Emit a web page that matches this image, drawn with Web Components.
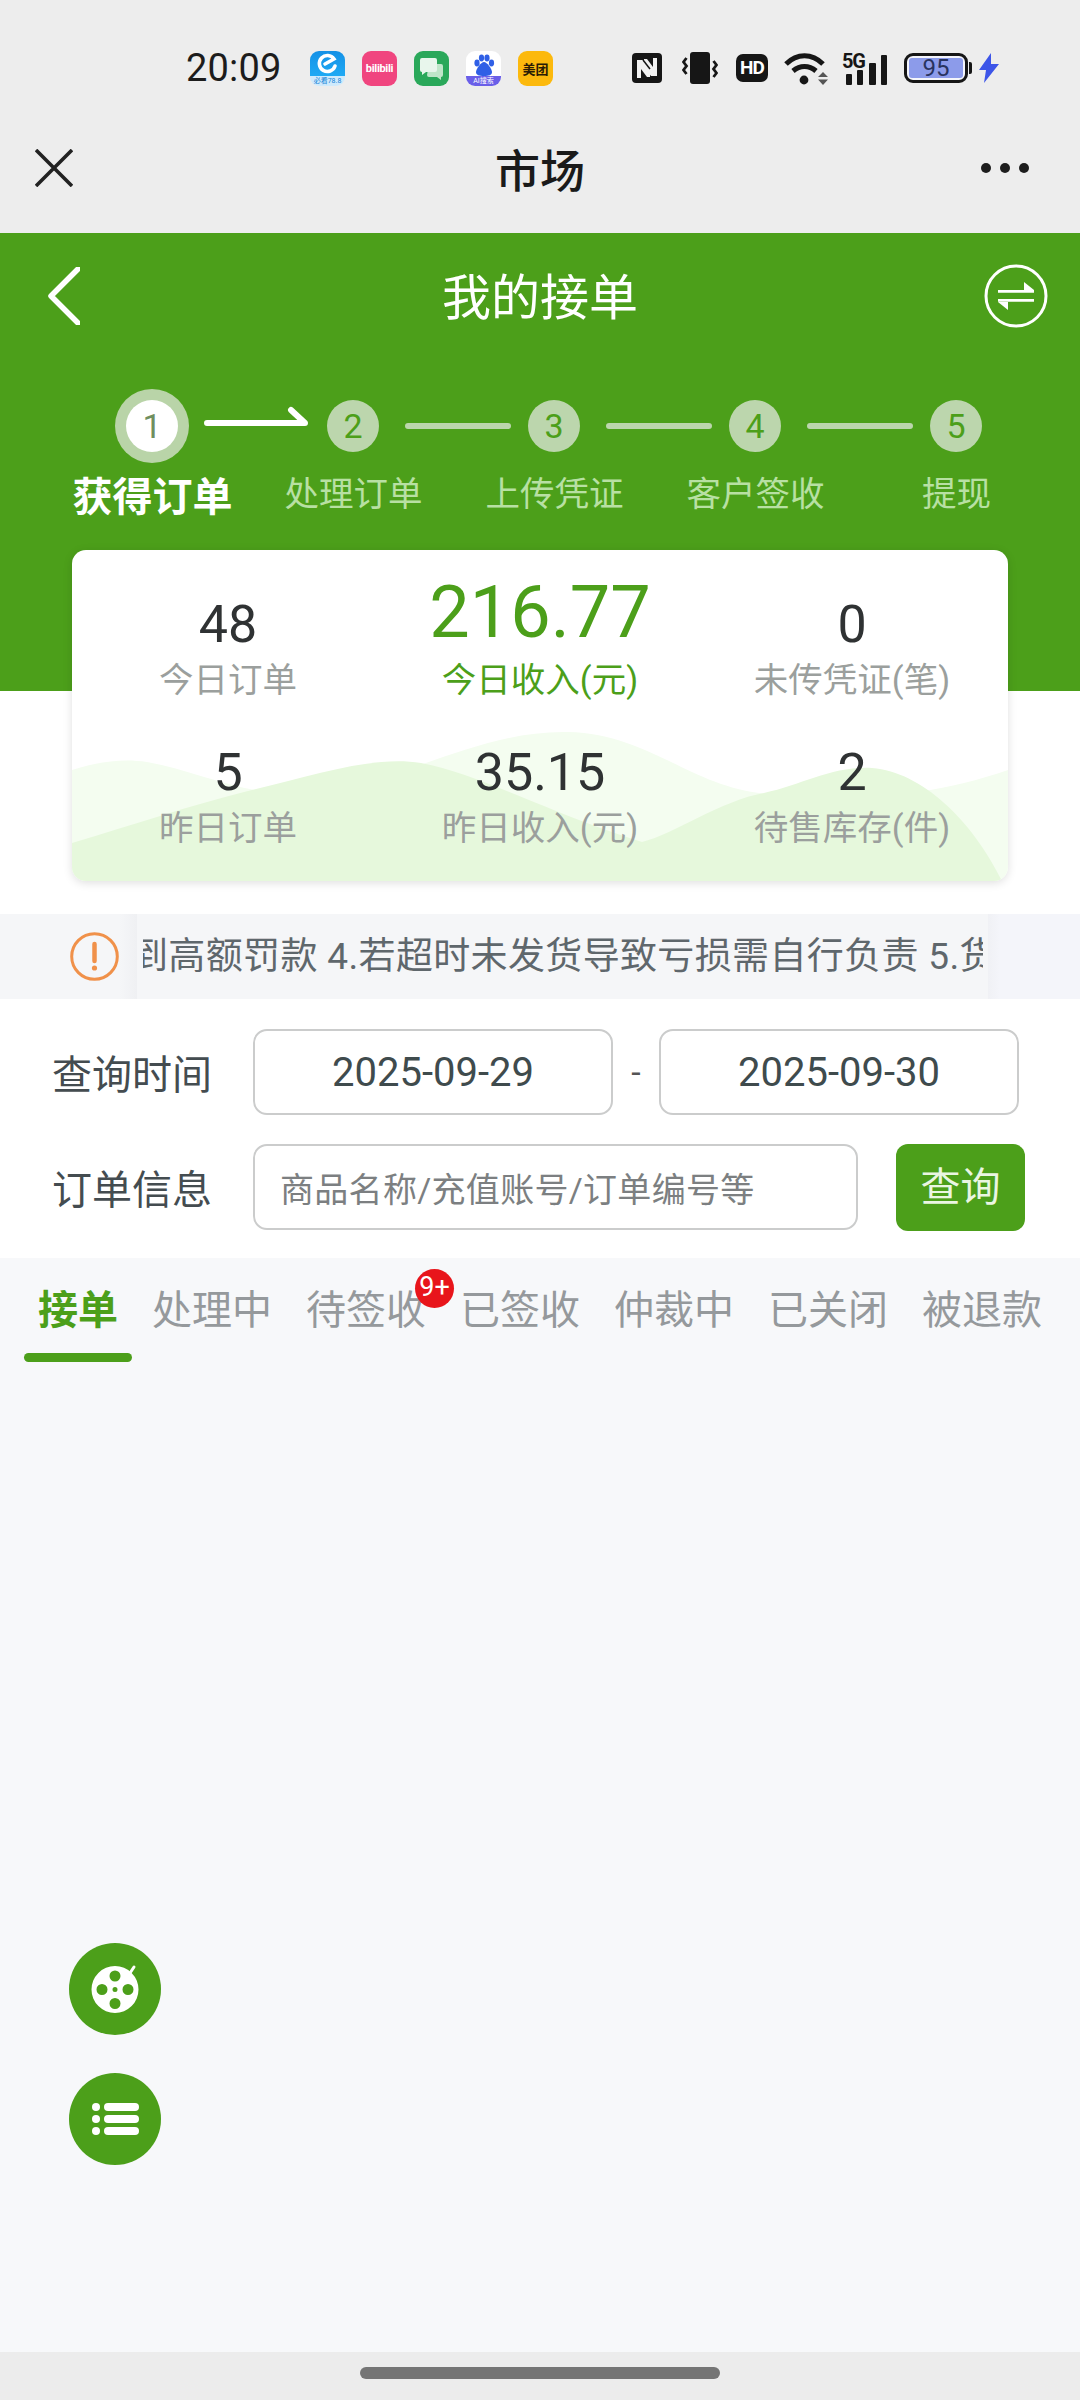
<!DOCTYPE html>
<html lang="zh">
<head>
<meta charset="utf-8">
<title>我的接单</title>
<style>
  html, body { margin: 0; padding: 0; }
  body {
    width: 1080px;
    height: 2400px;
    overflow: hidden;
    display: flex;
    flex-direction: column;
    position: relative;
    background: #f7f8fa;
    font-family: Roboto, "Noto Sans CJK SC", sans-serif;
  }
  .page-white { background: #fff; display: block; flex: none; }
</style>
</head>
<body>
  <status-bar></status-bar>
  <top-nav>市场</top-nav>
  <order-hero>我的接单</order-hero>
  <div class="page-white">
    <stat-card>
      <stat-item value="48">今日订单</stat-item>
      <stat-item value="216.77" big>今日收入(元)</stat-item>
      <stat-item value="0">未传凭证(笔)</stat-item>
      <stat-item value="5">昨日订单</stat-item>
      <stat-item value="35.15">昨日收入(元)</stat-item>
      <stat-item value="2">待售库存(件)</stat-item>
    </stat-card>
    <notice-bar>到高额罚款 4.若超时未发货导致亏损需自行负责 5.货</notice-bar>
    <query-form></query-form>
  </div>
  <order-tabs>
    <order-tab active>接单</order-tab>
    <order-tab>处理中</order-tab>
    <order-tab badge="9+">待签收</order-tab>
    <order-tab>已签收</order-tab>
    <order-tab>仲裁中</order-tab>
    <order-tab>已关闭</order-tab>
    <order-tab>被退款</order-tab>
  </order-tabs>
  <fab-button icon="reel" style="top:1943px"></fab-button>
  <fab-button icon="list" style="top:2073px"></fab-button>
  <home-bar></home-bar>

<script>
const FONT = 'Roboto, "Noto Sans CJK SC", sans-serif';

function define(name, html, render) {
  const tpl = document.createElement("template");
  tpl.innerHTML = html;
  class El extends HTMLElement {
    constructor() {
      super();
      this.attachShadow({ mode: "open" });
      this.shadowRoot.appendChild(tpl.content.cloneNode(true));
    }
    connectedCallback() {
      if (render) render.call(this);
    }
  }
  customElements.define(name, El);
}

//Status bar
define("status-bar", `
<style>
  :host { display: flex; align-items: center; box-sizing: border-box; height: 103px; padding: 33px 0 0 186px; background: #ededed; flex: none; font-family: ${FONT}; }
  .time { width: 124px; font-size: 38px; color: #1c1c1c; line-height: 70px; letter-spacing: .2px; }
  .apps { display: flex; gap: 17px; width: 322px; }
  .app { width: 35px; height: 35px; border-radius: 9px; position: relative; overflow: hidden; display: flex; align-items: center; justify-content: center; }
  .a1 { background: linear-gradient(#1591e6, #1ea9f4 70%, #cfeafc 72%); }
  .a1 span { position: absolute; left: 0; right: 0; bottom: 0; font-size: 7px; line-height: 10px; color: #1684d8; text-align: center; }
  .a2 { background: #f0457f; color: #fff; font-size: 11px; font-weight: 700; letter-spacing: -.3px; }
  .a3 { background: #2aa85a; }
  .a4 { background: #fff; }
  .a4 span { position: absolute; left: 0; right: 0; bottom: 0; height: 10px; font-size: 7px; line-height: 10px; color: #fff; background: #6a5fe8; text-align: center; }
  .a5 { background: #fcb90d; color: #2a1c05; font-size: 13px; font-weight: 700; }
  .right { display: flex; align-items: center; height: 70px; position: relative; }
  .hd { width: 32px; height: 28px; border-radius: 7px; background: #161616; color: #fff; font-size: 19px; font-weight: 700; line-height: 28px; text-align: center; margin: 0 16px 0 18px; letter-spacing: -.8px; }
  .sig { position: relative; width: 45px; height: 33px; margin-left: 13px; }
  .sig b { position: absolute; left: 0; top: 0; font-size: 20px; line-height: 18px; font-weight: 700; color: #161616; letter-spacing: -1.2px; }
  .bat { position: relative; box-sizing: border-box; width: 64px; height: 30px; border: 3px solid #161616; border-radius: 9px; margin-left: 17px; padding: 2px; background: #f4f5fb; }
  .bat i { display: block; height: 100%; border-radius: 3px; background: #8c9bea; font-style: normal; font-size: 24px; line-height: 20px; color: #29345f; text-align: center; }
  .nub { width: 3px; height: 12px; background: #161616; border-radius: 0 2px 2px 0; margin: 0 7px 0 1px; }
</style>
<div class="time">20:09</div>
<div class="apps">
  <div class="app a1">
    <svg width="26" height="26" viewBox="0 0 26 26" style="margin-top:-8px"><path d="M20 15a8 8 0 1 1-1-7l-9 5" fill="none" stroke="#fff" stroke-width="3.6" stroke-linecap="round"/></svg>
    <span>必看78.8</span>
  </div>
  <div class="app a2">bilibili</div>
  <div class="app a3">
    <svg width="27" height="27" viewBox="0 0 27 27"><path d="M11 9h12a2 2 0 0 1 2 2v9a2 2 0 0 1-2 2v3l-4-3h-8a2 2 0 0 1-2-2z" fill="#bfe6c9"/><path d="M4 3h13a2 2 0 0 1 2 2v10a2 2 0 0 1-2 2H8l-4 3v-3a2 2 0 0 1-2-2V5a2 2 0 0 1 2-2z" fill="#e8f6ec"/></svg>
  </div>
  <div class="app a4">
    <svg width="28" height="26" viewBox="0 0 28 26" style="margin-top:-9px"><g fill="#2f5fe6"><ellipse cx="7" cy="12" rx="2.6" ry="3.4"/><ellipse cx="11.5" cy="7" rx="2.6" ry="3.4"/><ellipse cx="17" cy="7" rx="2.6" ry="3.4"/><ellipse cx="21.5" cy="12" rx="2.6" ry="3.4"/><path d="M14 11c3 0 8 7 8 10s-3 4-8 4-8-1-8-4 5-10 8-10z"/></g></svg>
    <span>AI搜索</span>
  </div>
  <div class="app a5">美团</div>
</div>
<div class="right">
  <svg width="30" height="30" viewBox="0 0 30 30"><rect width="30" height="30" rx="4" fill="#161616"/><path d="M5 7h6l7 9V24h-3l-6-8v9H5zM25 23h-6l-7-9V6h3l6 8V5h4z" fill="#f2f2f2"/><path d="M11 7l7 9" stroke="#161616" stroke-width="1.5"/></svg>
  <svg width="36" height="32" viewBox="0 0 36 32" style="margin-left:20px"><rect x="8" width="20" height="32" rx="3" fill="#161616"/><path d="M4.500 6l-3 4 3 4-3 4 3 4M31.500 9l3 4-3 4 3 4-3 4" fill="none" stroke="#161616" stroke-width="2.800"/></svg>
  <div class="hd">HD</div>
  <svg width="45" height="33" viewBox="0 0 45 33"><path d="M2 12c11-11 26-11 37 0" fill="none" stroke="#161616" stroke-width="5"/><path d="M9 19c7-6 16-6 23 0" fill="none" stroke="#161616" stroke-width="5"/><circle cx="20" cy="28" r="4.400" fill="#161616"/><path d="M34 25l5-5 5 5zM34 27.500h10l-5 5.500z" fill="#555"/></svg>
  <div class="sig">
    <b>5G</b>
    <svg width="45" height="33" viewBox="0 0 45 33" style="position:absolute;left:0;top:0"><g fill="#161616"><rect x="4" y="22" width="6" height="11" rx="1"/><rect x="15" y="18" width="6" height="15" rx="1"/><rect x="27" y="11" width="7" height="22" rx="1"/><rect x="39" y="3" width="6" height="30" rx="1"/></g></svg>
  </div>
  <div class="bat"><i>95</i></div>
  <div class="nub"></div>
  <svg width="20" height="30" viewBox="0 0 20 30"><path d="M12 0L0 17h7l-2 13L20 11h-8z" fill="#3d55e8"/></svg>
</div>
`);

//Mini program nav
define("top-nav", `
<style>
  :host { display: grid; grid-template-columns: 1fr auto 1fr; align-items: center; box-sizing: border-box; height: 130px; padding: 0 51px; background: #ededed; flex: none; font-family: ${FONT}; }
  .t { font-size: 45px; font-weight: 500; color: #1a1a1a; }
  .l { margin-left: -16px; }
  .r { justify-self: end; }
  svg { display: block; }
</style>
<svg class="l" width="38" height="38" viewBox="0 0 38 38"><path d="M1 1l36 36M37 1L1 37" stroke="#222" stroke-width="3.600" fill="none"/></svg>
<div class="t"><slot></slot></div>
<svg class="r" width="48" height="12" viewBox="0 0 48 12"><circle cx="5" cy="6" r="5" fill="#1d1d1d"/><circle cx="24" cy="6" r="5" fill="#1d1d1d"/><circle cx="43" cy="6" r="5" fill="#1d1d1d"/></svg>
`);

//Green header with the step bar
define("order-hero", `
<style>
  :host { display: block; box-sizing: border-box; height: 458px; background: #4c9f1a; flex: none; font-family: ${FONT}; color: #fff; }
  .head { display: grid; grid-template-columns: 1fr auto 1fr; align-items: center; height: 124px; padding: 0 32px; }
  .title { font-size: 49px; line-height: 116px; margin-top: 8px; }
  .swap { justify-self: end; display: block; margin-top: 2px; }
  .back { display: block; margin-left: 16px; margin-top: 2px; }
  .steps { display: flex; align-items: center; height: 52px; margin-top: 43px; padding-left: 126px; }
  .num { flex: none; width: 52px; height: 52px; border-radius: 50%; background: #bcd6ad; color: #4c9f1a; font-size: 34px; line-height: 52px; text-align: center; }
  .num.on { background: #fff; color: #6f8f5f; box-shadow: 0 0 0 11px #b9d4a8; }
  .link { flex: none; box-sizing: border-box; width: 149px; padding-left: 26px; display: flex; }
  .link i { display: block; width: 106px; height: 6px; border-radius: 3px; background: #bcd6ad; }
  .labels { display: grid; grid-template-columns: repeat(5, 201px); margin: 17px 0 0 52px; font-size: 34.500px; line-height: 50px; color: #b8e0a3; text-align: center; white-space: nowrap; }
  .labels .on { color: #fff; font-size: 40px; font-weight: 700; margin-top: 4px; }
</style>
<div class="head">
  <svg class="back" width="32" height="58" viewBox="0 0 32 58"><path d="M30 2L3 29l27 27" fill="none" stroke="#fff" stroke-width="5.500" stroke-linecap="round" stroke-linejoin="round"/></svg>
  <div class="title"><slot></slot></div>
  <svg class="swap" width="64" height="64" viewBox="0 0 64 64"><circle cx="32" cy="32" r="30" fill="none" stroke="#fff" stroke-width="3"/><path d="M14 26h36v2.800H14zM40 18l10 8H40zM14 35h36v2.800H14zM24 46L14 38h10z" fill="#fff"/></svg>
</div>
<div class="steps">
  <div class="num on">1</div>
  <div class="link"><svg width="106" height="40" viewBox="0 0 106 40"><path d="M3 17h98L87 4" fill="none" stroke="#fff" stroke-width="6" stroke-linecap="round" stroke-linejoin="round"/></svg></div>
  <div class="num">2</div>
  <div class="link"><i></i></div>
  <div class="num">3</div>
  <div class="link"><i></i></div>
  <div class="num">4</div>
  <div class="link"><i></i></div>
  <div class="num">5</div>
</div>
<div class="labels">
  <div class="on">获得订单</div>
  <div>处理订单</div>
  <div>上传凭证</div>
  <div>客户签收</div>
  <div>提现</div>
</div>
`);

//Stats card
define("stat-card", `
<style>
  :host { display: block; position: relative; box-sizing: border-box; width: 936px; margin: -141px 0 0 72px; padding: 23px 0 27px; border-radius: 14px; background: #fff; box-shadow: 0 2px 10px rgba(0,0,0,.13); overflow: hidden; font-family: ${FONT}; }
  svg { position: absolute; left: 0; top: 0; }
  .grid { position: relative; display: grid; grid-template-columns: repeat(3, 1fr); row-gap: 39px; align-items: end; }
</style>
<svg width="936" height="331" viewBox="0 0 936 331">
  <path d="M0 220C25 212 50 208 75 212C130 222 170 246 230 243C320 240 400 180 496 182C580 184 620 240 700 244C770 250 850 250 936 220V331H0Z" fill="#f4fdf0"/>
  <path d="M0 293C60 275 120 255 172 242C240 226 300 205 349 213C410 225 470 260 570 292C600 285 650 250 692 243C730 235 760 216 800 218C850 222 900 270 930 331H0Z" fill="#e6f8dc"/>
</svg>
<div class="grid"><slot></slot></div>
`);

define("stat-item", `
<style>
  :host { display: flex; flex-direction: column; align-items: center; color: #9b9f9d; }
  .v { font-size: 52px; line-height: 56px; color: #2f3233; }
  .l { font-size: 34.500px; line-height: 52px; margin-top: 1px; white-space: nowrap; }
  :host([big]) { color: #4c9f1a; }
  :host([big]) .v { font-size: 72px; line-height: 80px; color: #4c9f1a; }
</style>
<div class="v"></div>
<div class="l"><slot></slot></div>
`, function () {
  this.shadowRoot.querySelector(".v").textContent = this.getAttribute("value");
});

//Scrolling notice
define("notice-bar", `
<style>
  :host { display: flex; height: 85px; margin-top: 33px; background: #f5f6f8; font-family: ${FONT}; }
  .ico { flex: none; width: 137px; box-sizing: border-box; padding-left: 70px; display: flex; align-items: center; background: linear-gradient(90deg, #f5f6f8 120px, #eff0f3 137px); }
  .txt { flex: none; width: 840px; margin-left: 6px; overflow: hidden; font-size: 37px; letter-spacing: .35px; line-height: 85px; color: #5f676c; white-space: nowrap; }
  .txt span { display: block; margin-left: -12px; }
  .end { flex: 1; margin-left: 5px; background: linear-gradient(90deg, #f0f1f5, #f4f5fa 12px); }
</style>
<div class="ico"><svg width="49" height="49" viewBox="0 0 49 49"><circle cx="24.500" cy="24.500" r="22.800" fill="none" stroke="#f0914a" stroke-width="3"/><path d="M24.500 12v17" stroke="#f0914a" stroke-width="4.500" stroke-linecap="round"/><circle cx="24.500" cy="36" r="2.600" fill="#f0914a"/></svg></div>
<div class="txt"><span><slot></slot></span></div>
<div class="end"></div>
`);

//Query form
define("query-form", `
<style>
  :host { display: block; box-sizing: border-box; height: 259px; padding-top: 30px; font-family: ${FONT}; }
  .row { display: flex; align-items: center; height: 86px; }
  .row + .row { margin-top: 29px; }
  .lab { flex: none; width: 253px; padding-left: 52px; box-sizing: border-box; font-size: 40px; color: #444c50; white-space: nowrap; }
  .box { flex: none; box-sizing: border-box; height: 86px; border: 2.500px solid #cbcccc; border-radius: 14px; background: #fff; display: flex; align-items: center; }
  .date { width: 360px; justify-content: center; font-size: 40px; color: #3f4b4d; }
  .dash { flex: none; width: 46px; text-align: center; font-size: 34px; color: #555; }
  .search { width: 605px; padding-left: 25px; font-size: 34px; letter-spacing: .3px; color: #7c7f81; }
  .btn { flex: none; margin-left: 38px; width: 129px; height: 87px; border-radius: 12px; background: #4c9f1a; color: #eaf6e2; font-size: 40px; line-height: 87px; text-align: center; }
</style>
<div class="row">
  <div class="lab">查询时间</div>
  <div class="box date">2025-09-29</div>
  <div class="dash">-</div>
  <div class="box date">2025-09-30</div>
</div>
<div class="row">
  <div class="lab">订单信息</div>
  <div class="box search">商品名称/充值账号/订单编号等</div>
  <div class="btn">查询</div>
</div>
`);

//Order tabs
define("order-tabs", `
<style>
  :host { display: flex; align-items: flex-start; flex: 1; padding: 28px 0 0 21px; background: #f7f8fa; font-family: ${FONT}; }
</style>
<slot></slot>
`);

define("order-tab", `
<style>
  :host { display: flex; flex-direction: column; align-items: center; position: relative; padding: 0 17px; font-size: 40px; line-height: 50px; color: #95999c; white-space: nowrap; }
  :host([active]) { color: #4c9f1a; font-weight: 700; }
  .bar { width: 0; height: 9px; margin-top: 17px; border-radius: 5px; }
  :host([active]) .bar { width: 108px; margin-left: -14px; margin-right: -14px; background: #4c9f1a; }
  .badge { display: none; position: absolute; left: 126px; top: -17px; width: 39px; height: 39px; border-radius: 50%; background: #e8151b; color: #fff; font-size: 27px; font-weight: 400; line-height: 37px; text-align: center; }
</style>
<div><slot></slot></div>
<div class="bar"></div>
<div class="badge"></div>
`, function () {
  const b = this.getAttribute("badge");
  if (b) {
    const el = this.shadowRoot.querySelector(".badge");
    el.textContent = b;
    el.style.display = "block";
  }
});

//Floating buttons
const FAB_ICONS = {
  reel: `<svg width="54" height="54" viewBox="0 0 54 54"><path d="M27 4a23.500 23.500 0 1 0 0 47 23.500 23.500 0 0 0 0-47zm0 4.500a5.500 5.500 0 1 1 0 11 5.500 5.500 0 0 1 0-11zM14 33a5.500 5.500 0 1 1 0-11 5.500 5.500 0 0 1 0 11zm13-3a2.500 2.500 0 1 1 0-5 2.500 2.500 0 0 1 0 5zm0 17a5.500 5.500 0 1 1 0-11 5.500 5.500 0 0 1 0 11zm13-14a5.500 5.500 0 1 1 0-11 5.500 5.500 0 0 1 0 11z" fill="#fff" fill-rule="evenodd"/><path d="M42 11l4-6" stroke="#fff" stroke-width="3" stroke-linecap="round"/></svg>`,
  list: `<svg width="48" height="34" viewBox="0 0 48 34" style="margin-left:1px"><g fill="#fff"><circle cx="4" cy="5" r="4"/><circle cx="4" cy="17" r="4"/><circle cx="4" cy="29" r="4"/><rect x="12" y="1" width="35" height="8" rx="4"/><rect x="12" y="13" width="35" height="8" rx="4"/><rect x="12" y="25" width="35" height="8" rx="4"/></g></svg>`
};
define("fab-button", `
<style>
  :host { position: absolute; left: 69px; display: flex; align-items: center; justify-content: center; width: 92px; height: 92px; border-radius: 50%; background: #4c9f1a; }
  span { display: block; }
  svg { display: block; }
</style>
<span></span>
`, function () {
  this.shadowRoot.querySelector("span").innerHTML = FAB_ICONS[this.getAttribute("icon")];
});

//System gesture bar
define("home-bar", `
<style>
  :host { display: flex; justify-content: center; box-sizing: border-box; height: 48px; padding-top: 15px; background: #ececec; flex: none; }
  div { width: 360px; height: 12px; border-radius: 6px; background: #757575; }
</style>
<div></div>
`);
</script>
</body>
</html>
